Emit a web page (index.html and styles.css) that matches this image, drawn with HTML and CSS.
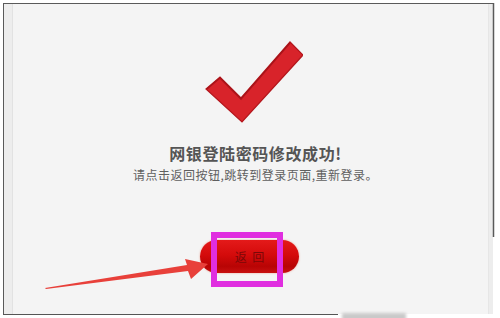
FILE: index.html
```html
<!DOCTYPE html>
<html lang="zh">
<head>
<meta charset="utf-8">
<title>网银登陆密码修改成功</title>
<link rel="stylesheet" href="styles.css">
</head>
<body>
<div class="window">
  <div class="panel">
    <svg class="check" width="98" height="83" viewBox="201 41 98 83" aria-hidden="true">
      <polygon points="202,89 216,77 237,98 286,42 299,55 238,122" fill="#d8232a" stroke="#b3161c" stroke-width="1.2" stroke-linejoin="miter"/>
      <polyline points="203,89 216,78 237,99 286,43" fill="none" stroke="#9e1016" stroke-width="1.6" opacity="0.7"/>
    </svg>
    <h1 class="title">网银登陆密码修改成功!</h1>
    <p class="desc">请点击返回按钮,跳转到登录页面,重新登录。</p>
    <button class="back" type="button">返&nbsp;&nbsp;回</button>
  </div>
</div>
<svg class="overlay" width="500" height="318" viewBox="0 0 500 318" aria-hidden="true">
  <defs>
    <filter id="blur" x="-20%" y="-100%" width="140%" height="300%">
      <feGaussianBlur stdDeviation="1.5"/>
    </filter>
  </defs>
  <line x1="493.5" y1="3" x2="493.5" y2="237" stroke="#5a5a5a" stroke-width="1.5"/>
  <line x1="3" y1="314.5" x2="338" y2="314.5" stroke="#555" stroke-width="1"/>
  <rect x="342" y="313" width="64" height="8" fill="#c9c9c9" filter="url(#blur)"/>
  <polygon points="45,288 187,265 185,259 208,264 191,279 188,271 46,289" fill="#e8403a"/>
  <rect x="214" y="235" width="66" height="49" fill="none" stroke="#e02ee0" stroke-width="6"/>
</svg>
</body>
</html>
```
FILE: styles.css
```css
html, body {
  margin: 0;
  padding: 0;
}
body {
  width: 500px;
  height: 318px;
  background: #ffffff;
  position: relative;
  overflow: hidden;
  font-family: "Noto Sans CJK SC", "Noto Sans", sans-serif;
}
.window {
  margin: 3px 0 0 3px;
  width: 490px;
  height: 311px;
  border-top: 1px solid #5a5a5a;
  border-left: 1px solid #5a5a5a;
  background: #ededed;
  display: flex;
  box-sizing: border-box;
}
.panel {
  flex: 1;
  margin: 0 4px 0 8px;
  border-left: 1px solid #e2e2e2;
  border-right: 1px solid #e6e6e6;
  background: #f4f4f4;
  display: flex;
  flex-direction: column;
  align-items: center;
  padding-top: 37px;
  padding-left: 6px;
}
.check {
  display: block;
}
.title {
  margin: 19px 0 0 0;
  font-size: 16px;
  line-height: 20px;
  font-weight: 700;
  color: #555555;
  letter-spacing: 0.6px;
  padding-left: 4px;
}
.desc {
  margin: 4px 0 0 0;
  font-size: 12px;
  line-height: 16px;
  color: #5f5f5f;
  letter-spacing: 0.5px;
  padding-left: 4px;
}
.back {
  margin: 57px 0 0 0;
  width: 99px;
  height: 33px;
  border: none;
  border-radius: 17px;
  background: linear-gradient(to bottom, #e41a1a 0%, #d40b0b 45%, #b80404 80%, #c81010 100%);
  box-shadow: 0 0 2px rgba(230, 90, 60, 0.6);
  color: #7a0808;
  font-family: "Noto Sans CJK SC", sans-serif;
  font-size: 12px;
  line-height: 33px;
  padding: 0;
  margin-left: -8px;
}
.overlay {
  position: absolute;
  left: 0;
  top: 0;
  pointer-events: none;
}
```
